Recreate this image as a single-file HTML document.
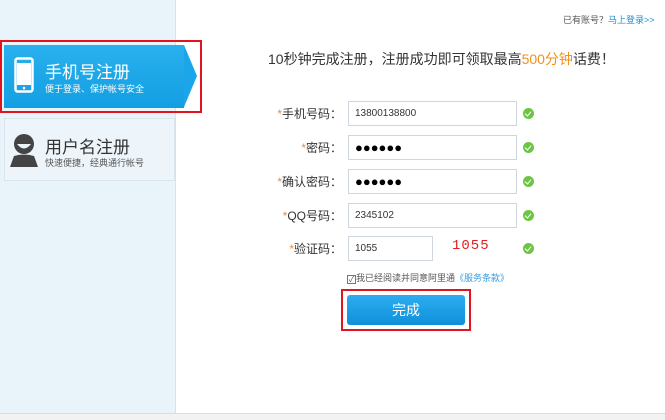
<!DOCTYPE html>
<html><head><meta charset="utf-8"><style>
*{margin:0;padding:0;box-sizing:border-box}
body{width:665px;height:420px;background:#fff;font-family:"Liberation Sans","Noto Sans CJK SC",sans-serif;position:relative;overflow:hidden;color:#333}
.side{position:absolute;left:0;top:0;width:176px;height:414px;background:#e9f3fa;border-right:1px solid #d5e3ee}
.bot{position:absolute;left:0;top:413px;width:665px;height:7px;background:#f2f2f2;border-top:1px solid #ddd}
.redbox{position:absolute;border:2px solid #e0141e}
.tab1{position:absolute;left:4px;top:45px;width:180px;height:63px;background:linear-gradient(#2ab0ee,#129fe2);}
.arrow{position:absolute;left:184px;top:45px;width:0;height:0;border-top:31.5px solid transparent;border-bottom:31.5px solid transparent;border-left:13px solid #1aa6e8}
.t{position:absolute;color:#fff}
.tab2{position:absolute;left:4px;top:118px;width:171px;height:63px;background:#edf5fb;border:1px solid #d8e4ee}
.lab{position:absolute;font-size:12px;color:#333;text-align:right;width:100px;left:242px}
.lab b{color:#f08a3c;font-weight:normal}
.inp{position:absolute;left:348px;height:25px;border:1px solid #cfd6df;background:#fff;font-size:10px;padding-left:6px;line-height:23px;color:#333}
.ok{position:absolute;left:523px;width:11px;height:11px;border-radius:50%;background:#6cc644}
.ok:after{content:"";position:absolute;left:3px;top:2px;width:3px;height:5px;border:solid #fff;border-width:0 1.5px 1.5px 0;transform:rotate(40deg)}
.dots{font-size:13px;letter-spacing:0;line-height:23px;color:#000}
</style></head><body>
<div class="side"></div>
<div class="bot"></div>
<div class="tab1"></div><div class="arrow"></div>
<svg style="position:absolute;left:14px;top:57px" width="22" height="38"><rect x="1.5" y="1.5" width="17" height="33" rx="2" fill="none" stroke="#fff" stroke-width="2.5"/><rect x="3" y="6" width="14" height="22" fill="#fff"/><circle cx="10" cy="31" r="1.3" fill="#fff"/></svg>
<div class="t" style="left:45px;top:58px;font-size:17px">手机号注册</div>
<div class="t" style="left:45px;top:82px;font-size:9px">便于登录、保护帐号安全</div>
<div class="redbox" style="left:0;top:40px;width:202px;height:73px"></div>
<div class="tab2"></div>
<svg style="position:absolute;left:10px;top:133px" width="28" height="34"><circle cx="14" cy="11" r="10" fill="#444"/><path d="M7 11 Q14 20 21 11Z" fill="#e9f3fa"/><path d="M0 34 L4 23 Q14 20 24 23 L28 34Z" fill="#444"/></svg>
<div style="position:absolute;left:45px;top:133px;font-size:17px;color:#333">用户名注册</div>
<div style="position:absolute;left:45px;top:156px;font-size:9px;color:#555">快速便捷，经典通行帐号</div>
<div style="position:absolute;left:563px;top:13px;font-size:9px;color:#555">已有账号？<span style="color:#1a8fd6">马上登录&gt;&gt;</span></div>
<div style="position:absolute;left:268px;top:49px;font-size:14px;color:#333">10秒钟完成注册，注册成功即可领取最高<span style="color:#f39019">500分钟</span>话费！</div>
<div class="lab" style="top:105px"><b>*</b>手机号码：</div>
<div class="inp" style="top:101px;width:169px">13800138800</div><div class="ok" style="top:108px"></div>
<div class="lab" style="top:139px"><b>*</b>密码：</div>
<div class="inp dots" style="top:135px;width:169px">●●●●●●</div><div class="ok" style="top:142px"></div>
<div class="lab" style="top:173px"><b>*</b>确认密码：</div>
<div class="inp dots" style="top:169px;width:169px">●●●●●●</div><div class="ok" style="top:176px"></div>
<div class="lab" style="top:207px"><b>*</b>QQ号码：</div>
<div class="inp" style="top:203px;width:169px">2345102</div><div class="ok" style="top:210px"></div>
<div class="lab" style="top:240px"><b>*</b>验证码：</div>
<div class="inp" style="top:236px;width:85px">1055</div><div class="ok" style="top:243px"></div>
<div style="position:absolute;left:452px;top:238px;font-size:14px;color:#e02020;font-family:'Liberation Mono',monospace;letter-spacing:1px">1055</div>
<div style="position:absolute;left:347px;top:271px;font-size:9px;color:#555"><span style="display:inline-block;width:9px;height:9px;border:1px solid #777;font-size:8px;line-height:7px;text-align:center;vertical-align:-1px">✓</span>我已经阅读并同意阿里通<span style="color:#3a9de0">《服务条款》</span></div>
<div class="redbox" style="left:341px;top:289px;width:130px;height:42px"></div>
<div style="position:absolute;left:347px;top:295px;width:118px;height:30px;border-radius:3px;background:linear-gradient(#2eaef0,#0e8fd9);color:#fff;font-size:14px;text-align:center;line-height:30px">完成</div>
</body></html>
